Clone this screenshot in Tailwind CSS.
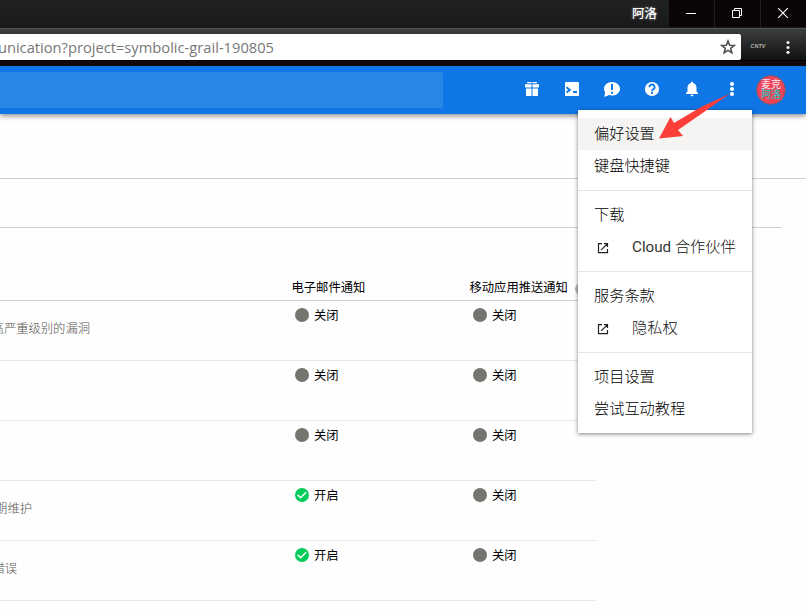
<!DOCTYPE html>
<html lang="zh-CN">
<head>
<meta charset="utf-8">
<title>通信</title>
<script src="https://cdn.jsdelivr.net/npm/@tailwindcss/browser@4"></script>
</head>
<body class="bg-white">
<div class="relative flex h-[616px] w-[806px] flex-col overflow-hidden bg-[#fefefe] font-['Roboto','Noto_Sans_CJK_SC',sans-serif] text-black">
  <!-- Window title bar -->
  <div class="flex h-7 shrink-0 justify-end bg-linear-to-b from-[#202122] to-[#19191a]">
    <div class="flex h-[29px] items-center pr-3 text-[12.5px] font-medium text-white [text-shadow:0_0_3px_#888]">阿洛</div>
    <div class="flex h-[27px] gap-px bg-[#232020] text-white">
      <div class="flex w-[45px] items-center justify-center bg-[#0c0506]"><svg width="10" height="11" viewBox="0 0 10 11" class="mr-0.5"><path d="M0 5.5h10" stroke="currentColor"/></svg></div>
      <div class="flex w-[45px] items-center justify-center bg-[#0c0506] pr-0.5 pb-0.5"><svg width="10" height="10" viewBox="0 0 10 10" fill="none" stroke="currentColor"><path d="M.5 2.5h7v7h-7zM2.5 2.500v-2h7v7h-2"/></svg></div>
      <div class="flex w-[45px] items-center justify-center bg-[#0c0506] pr-0.5 pb-0.5"><svg width="10" height="10" viewBox="0 0 10 10" stroke="currentColor" stroke-width="1.1"><path d="M0 0l10 10M10 0L0 10"/></svg></div>
    </div>
  </div>
  <!-- Address bar -->
  <div class="flex h-8 shrink-0 border-t border-[#505152] bg-linear-to-b from-[#3d3f3f] to-[#111213] pt-[5px]">
    <div class="flex h-[26px] w-[741px] items-center justify-between rounded-r-xs bg-white pr-[5px]">
      <div class="flex w-[274px] justify-end overflow-hidden"><span class="shrink-0 whitespace-nowrap font-['Open_Sans','Noto_Sans',sans-serif] text-[14.7px] leading-[26px] text-[#777]">unication?project=symbolic-grail-190805</span></div>
      <svg width="16" height="16" viewBox="0 0 16 16" fill="none" stroke="#505050" stroke-width="1.6" stroke-linejoin="miter"><path d="M8 2l1.700 4.200 4.500.3-3.500 2.900 1.200 4.400L8 11.400l-3.900 2.400 1.200-4.400-3.500-2.900 4.500-.3z"/></svg>
    </div>
    <div class="w-[34px] pt-[9px] text-center font-['Liberation_Sans',sans-serif] text-[5.5px] leading-[6px] font-bold italic text-[#b5b5ad]">CNTV</div>
    <svg class="mt-1.5 ml-[11px]" width="4" height="14" viewBox="0 0 4 14" fill="#eee"><circle cx="2" cy="2.500" r="1.600"/><circle cx="2" cy="7.500" r="1.600"/><circle cx="2" cy="12.300" r="1.600"/></svg>
  </div>
  <div class="h-1.5 shrink-0 border-t border-black bg-[#140a0c]"></div>
  <!-- Console header -->
  <header class="relative flex h-12 shrink-0 items-center justify-between bg-[#0f76e6] pr-5 text-white shadow-[0_2px_5px_rgba(0,0,0,.45)]">
    <div class="h-9 w-[443px] rounded-r-xs bg-[#2987e8]"></div>
    <div class="flex items-center">
      <div class="flex gap-5 pr-3.5">
        <svg class="-mt-0.5" width="20" height="20" viewBox="0 0 20 20" fill="currentColor"><path d="M5 3h4l1 1 1-1h4v1.300H5zM3 5.300h6.500v3.200H3zM10.500 5.300H17v3.200h-6.500zM4 9.500h5.500V17H4zM10.500 9.500H16V17h-5.500z"/></svg>
        <svg class="-mt-0.5" width="20" height="20" viewBox="0 0 20 20"><rect x="3" y="3" width="14" height="14" rx="1" fill="currentColor"/><path d="M4.500 8.200l3.300 2.700-3.300 2.700M11 13h4" fill="none" stroke="#0f76e6" stroke-width="2"/></svg>
        <svg class="-mt-0.5" width="20" height="20" viewBox="0 0 20 20"><path d="M10 3c4.500 0 8 3 8 6.800s-3.500 6.800-8 6.800c-1 0-2-.2-2.900-.5L2.300 18l.8-4.400C2.400 12.500 2 11.200 2 9.800 2 6 5.500 3 10 3z" fill="currentColor"/><path d="M10 5v6M10 12.800v2" stroke="#0f76e6" stroke-width="2"/></svg>
        <svg class="-mt-0.5" width="20" height="20" viewBox="0 0 20 20"><circle cx="10" cy="10" r="7.100" fill="currentColor"/><path d="M7.400 8.300a2.600 2.600 0 1 1 4 2c-.9.600-1.400 1-1.400 1.900M10 13v1.900" fill="none" stroke="#0f76e6" stroke-width="1.800"/></svg>
        <svg class="-mt-0.5" width="20" height="20" viewBox="0 0 20 20" fill="currentColor"><path d="M10 2.800c.7 0 1.100.5 1.100 1.200 2.200.6 3.400 2.300 3.400 4.500v4l1.500 1.500v1H4v-1l1.500-1.500v-4c0-2.200 1.200-3.900 3.400-4.500 0-.7.400-1.200 1.100-1.200zM8.500 15.800h3c0 .9-.6 1.500-1.500 1.500s-1.500-.6-1.500-1.500z"/></svg>
        <svg class="-mt-0.5" width="20" height="20" viewBox="0 0 20 20" fill="currentColor"><circle cx="10" cy="5" r="2"/><circle cx="10" cy="10" r="2"/><circle cx="10" cy="15" r="2"/></svg>
      </div>
      <div class="flex size-[30px] flex-col items-center justify-center rounded-full border border-[#59617f] bg-[#ef4358] text-[10px] leading-[10px] font-medium"><span class="text-[#f7dce3]">麦克</span><span class="text-[#27c5c2]">阿洛</span></div>
    </div>
  </header>
  <!-- Page content -->
  <div class="h-[65px] shrink-0 border-b border-[#d0d0ca]"></div>
  <div class="mr-6 h-[49px] shrink-0 border-b border-[#d0d0ca]"></div>
  <main class="w-[596px] pt-[47px] text-[12.3px]">
    <div class="flex h-[26px] items-center border-b border-[#d0d0d0] pl-[291.500px]">
      <div class="w-[178px] pt-0.5">电子邮件通知</div>
      <div class="flex items-center gap-[7px] pt-0.5 whitespace-nowrap">移动应用推送通知<span class="size-3 rounded-full bg-[#bab8b0]"></span></div>
    </div>
    <div class="flex h-[60px] border-b border-[#e8e8e8]">
      <div class="flex w-[90px] justify-end overflow-hidden pt-[19px] text-[#55554f]"><span class="shrink-0 whitespace-nowrap font-light">高严重级别的漏洞</span></div>
      <div class="ml-[205px] flex h-7 w-[178px] items-center gap-[5px]"><span class="size-3.5 rounded-full bg-[#757570]"></span><span class="pt-0.5">关闭</span></div>
      <div class="flex h-7 items-center gap-[5px]"><span class="size-3.5 rounded-full bg-[#757570]"></span><span class="pt-0.5">关闭</span></div>
    </div>
    <div class="flex h-[60px] border-b border-[#e8e8e8] pl-[295px]">
      <div class="flex h-7 w-[178px] items-center gap-[5px]"><span class="size-3.5 rounded-full bg-[#757570]"></span><span class="pt-0.5">关闭</span></div>
      <div class="flex h-7 items-center gap-[5px]"><span class="size-3.5 rounded-full bg-[#757570]"></span><span class="pt-0.5">关闭</span></div>
    </div>
    <div class="flex h-[60px] border-b border-[#e8e8e8] pl-[295px]">
      <div class="flex h-7 w-[178px] items-center gap-[5px]"><span class="size-3.5 rounded-full bg-[#757570]"></span><span class="pt-0.5">关闭</span></div>
      <div class="flex h-7 items-center gap-[5px]"><span class="size-3.5 rounded-full bg-[#757570]"></span><span class="pt-0.5">关闭</span></div>
    </div>
    <div class="flex h-[60px] border-b border-[#e8e8e8]">
      <div class="flex w-[32px] justify-end overflow-hidden pt-[19px] text-[#55554f]"><span class="shrink-0 whitespace-nowrap font-light">期维护</span></div>
      <div class="ml-[263px] flex h-7 w-[178px] items-center gap-[5px]"><svg width="14" height="14" viewBox="0 0 14 14"><circle cx="7" cy="7" r="7" fill="#06cc5b"/><path d="M2.600 6.800l3 3L11.200 4.200" fill="none" stroke="#fff" stroke-width="1.500"/></svg><span class="pt-0.5">开启</span></div>
      <div class="flex h-7 items-center gap-[5px]"><span class="size-3.5 rounded-full bg-[#757570]"></span><span class="pt-0.5">关闭</span></div>
    </div>
    <div class="flex h-[60px] border-b border-[#e8e8e8]">
      <div class="flex w-[17px] justify-end overflow-hidden pt-[19px] text-[#55554f]"><span class="shrink-0 whitespace-nowrap font-light">错误</span></div>
      <div class="ml-[278px] flex h-7 w-[178px] items-center gap-[5px]"><svg width="14" height="14" viewBox="0 0 14 14"><circle cx="7" cy="7" r="7" fill="#06cc5b"/><path d="M2.600 6.800l3 3L11.200 4.200" fill="none" stroke="#fff" stroke-width="1.500"/></svg><span class="pt-0.5">开启</span></div>
      <div class="flex h-7 items-center gap-[5px]"><span class="size-3.5 rounded-full bg-[#757570]"></span><span class="pt-0.5">关闭</span></div>
    </div>
  </main>
  <!-- Overflow menu -->
  <nav class="absolute top-[110px] left-[578px] w-[174px] divide-y divide-[#e5e5e5] bg-white text-[15.2px] leading-8 font-light shadow-[0_1px_4px_rgba(0,0,0,.5)]">
    <div class="py-2"><div class="h-8 bg-[#f5f4f2] px-4">偏好设置</div><div class="h-8 px-4">键盘快捷键</div></div>
    <div class="py-2"><div class="h-8 px-4">下载</div><div class="flex h-8 items-center gap-[23px] pl-[19px] whitespace-nowrap text-[#111]"><svg class="mt-0.5" width="12" height="12" viewBox="0 0 12 12" fill="none" stroke="#222" stroke-width="1.200"><path d="M5 1.600H1.500v9h9V7M7 1.600h3.500V5M10.300 1.800L4.200 7.900"/></svg><span><span class="font-normal text-[#333]">Cloud</span> 合作伙伴</span></div></div>
    <div class="py-2"><div class="h-8 px-4">服务条款</div><div class="flex h-8 items-center gap-[23px] pl-[19px] whitespace-nowrap text-[#111]"><svg class="mt-0.5" width="12" height="12" viewBox="0 0 12 12" fill="none" stroke="#222" stroke-width="1.200"><path d="M5 1.600H1.500v9h9V7M7 1.600h3.500V5M10.300 1.800L4.200 7.900"/></svg>隐私权</div></div>
    <div class="py-2"><div class="h-8 px-4">项目设置</div><div class="h-8 px-4">尝试互动教程</div></div>
  </nav>
  <svg class="absolute top-[90px] left-[656px]" width="78" height="52" viewBox="0 0 78 52" fill="#fb3e38"><path d="M74 3.500L45 17 18 33l-3.500-6L3 48.500l24-2.500-5-6 26-18z"/></svg>
</div>
</body>
</html>
